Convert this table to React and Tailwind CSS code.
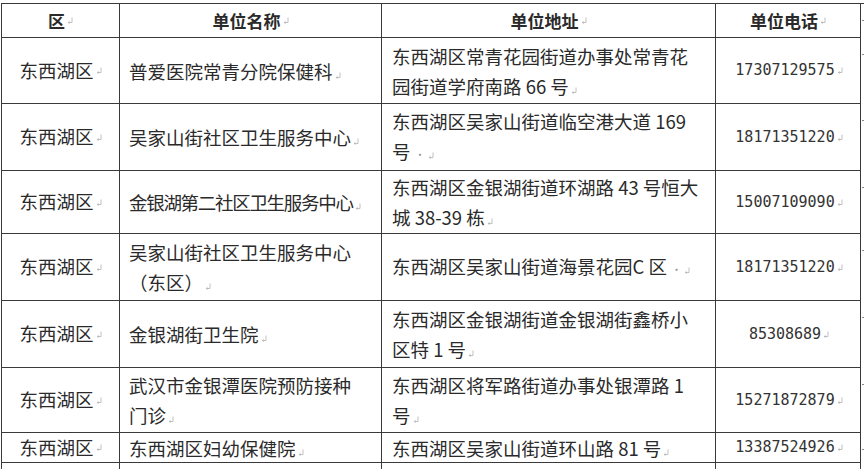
const rows = [
  {
    h: 'h-[66px]',
    name: ['普爱医院常青分院保健科'],
    addr: ['东西湖区常青花园街道办事处常青花', '园街道学府南路 66 号'],
    tel: '17307129575',
  },
  {
    h: 'h-[67px]',
    name: ['吴家山街社区卫生服务中心'],
    addr: ['东西湖区吴家山街道临空港大道 169', '号·'],
    tel: '18171351220',
  },
  {
    h: 'h-[63px]',
    name: ['金银湖第二社区卫生服务中心'],
    tight: true,
    addr: ['东西湖区金银湖街道环湖路 43 号恒大', '城 38-39 栋'],
    tel: '15007109090',
  },
  {
    h: 'h-[67px]',
    name: ['吴家山街社区卫生服务中心', '（东区）'],
    addr: ['东西湖区吴家山街道海景花园C 区·'],
    tel: '18171351220',
  },
  {
    h: 'h-[67px]',
    name: ['金银湖街卫生院'],
    addr: ['东西湖区金银湖街道金银湖街鑫桥小', '区特 1 号'],
    tel: '85308689',
  },
  {
    h: 'h-[65px]',
    name: ['武汉市金银潭医院预防接种', '门诊'],
    addr: ['东西湖区将军路街道办事处银潭路 1', '号'],
    tel: '15271872879',
  },
  {
    h: 'h-[30px]',
    name: ['东西湖区妇幼保健院'],
    addr: ['东西湖区吴家山街道环山路 81 号'],
    tel: '13387524926',
  },
]

// Word paragraph mark
function Mark() {
  return (
    <svg width="6" height="7" viewBox="0 0 6 7" className="inline-block ml-[2px] align-baseline">
      <path d="M5 0.5 V5.5 H1.2 M2.6 4.2 L1.2 5.5 L2.6 6.6" fill="none" stroke="#b0b0b0" strokeWidth="0.8" />
    </svg>
  )
}

function Lines({ lines }) {
  return (
    <div className="leading-[30px]">
      {lines.map((l, i) => {
        const dot = l.endsWith('·')
        const text = dot ? l.slice(0, -1) : l
        return (
          <div key={i} className="whitespace-nowrap">
            {text}
            {dot && <span className="ml-[4px] text-[11px] text-[#999]">·</span>}
            {i === lines.length - 1 && <Mark />}
          </div>
        )
      })}
    </div>
  )
}

function Tick() {
  return (
    <div className="pt-[16px] pl-[1px]">
      <div className="h-[1px] w-[3px] bg-[#888]" />
    </div>
  )
}

const cell = 'border-r-[1.5px] border-b-[1.5px] border-[#3a3a3a] flex items-center'

export default function App() {
  return (
    <div
      className="h-[469px] w-[864px] overflow-hidden bg-white text-[#2a2a2a] text-[18.5px]"
      style={{ fontFamily: '"Noto Sans CJK SC", "Noto Sans", sans-serif' }}
    >
      <div className="ml-[1px] mt-[3px] grid grid-cols-[118px_262px_334px_145px_4px] border-l-[1.5px] border-t-[1.5px] border-[#3a3a3a] w-max">
        {/* header */}
        <div className={`${cell} h-[34px] justify-center font-bold text-[17px]`}>
          区<Mark />
        </div>
        <div className={`${cell} h-[34px] justify-center font-bold text-[17px]`}>
          单位名称<Mark />
        </div>
        <div className={`${cell} h-[34px] justify-center font-bold text-[17px]`}>
          单位地址<Mark />
        </div>
        <div className={`${cell} h-[34px] justify-center font-bold text-[17px]`}>
          单位电话<Mark />
        </div>
        <Tick />

        {rows.map((r, i) => (
          <div key={i} className="contents">
            <div className={`${cell} ${r.h} justify-center`}>
              东西湖区<Mark />
            </div>
            <div className={`${cell} ${r.h} pl-[9px] ${r.tight ? 'tracking-[-1.3px]' : ''}`}>
              <Lines lines={r.name} />
            </div>
            <div className={`${cell} ${r.h} pl-[10px]`}>
              <Lines lines={r.addr} />
            </div>
            <div className={`${cell} ${r.h} justify-center pl-[2px]`}>
              <span className="text-[15px] text-[#333]" style={{ fontFamily: '"DejaVu Sans Mono", monospace' }}>
                {r.tel}
              </span>
              <Mark />
            </div>
            <Tick />
          </div>
        ))}

        {/* next row, cut off at the bottom */}
        <div className={`${cell} h-[30px]`} />
        <div className={`${cell} h-[30px]`} />
        <div className={`${cell} h-[30px]`} />
        <div className={`${cell} h-[30px]`} />
        <div />
      </div>
    </div>
  )
}
